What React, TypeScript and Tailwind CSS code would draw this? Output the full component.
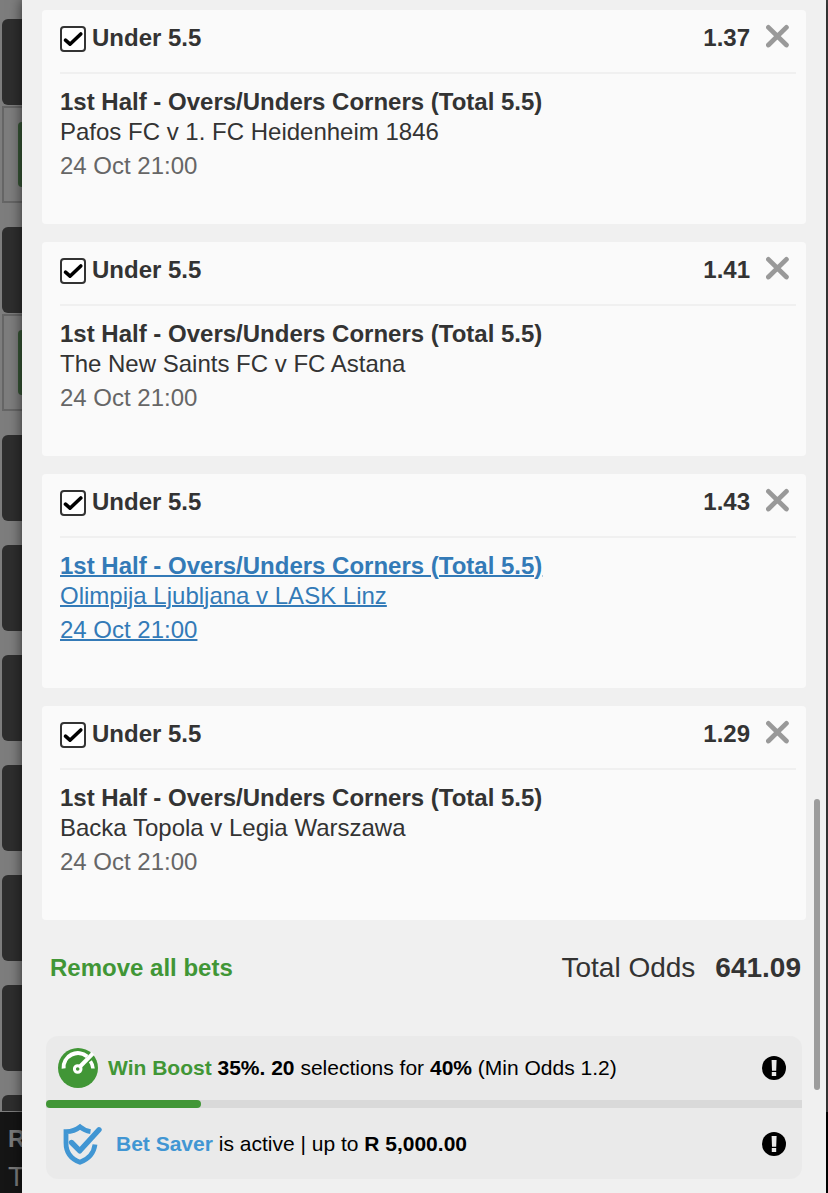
import { useState } from 'react'

type Bet = {
  id: number
  pick: string
  odds: string
  market: string
  fixture: string
  time: string
  highlighted?: boolean
}

const initialBets: Bet[] = [
  { id: 1, pick: 'Under 5.5', odds: '1.37', market: '1st Half - Overs/Unders Corners (Total 5.5)', fixture: 'Pafos FC v 1. FC Heidenheim 1846', time: '24 Oct 21:00' },
  { id: 2, pick: 'Under 5.5', odds: '1.41', market: '1st Half - Overs/Unders Corners (Total 5.5)', fixture: 'The New Saints FC v FC Astana', time: '24 Oct 21:00' },
  { id: 3, pick: 'Under 5.5', odds: '1.43', market: '1st Half - Overs/Unders Corners (Total 5.5)', fixture: 'Olimpija Ljubljana v LASK Linz', time: '24 Oct 21:00', highlighted: true },
  { id: 4, pick: 'Under 5.5', odds: '1.29', market: '1st Half - Overs/Unders Corners (Total 5.5)', fixture: 'Backa Topola v Legia Warszawa', time: '24 Oct 21:00' },
]

const boostProgress = 20.5

function GaugeIcon() {
  return (
    <svg viewBox="0 0 40 40" className="size-10 shrink-0" fill="none" aria-hidden="true">
      <circle cx="20" cy="20" r="20" fill="#419636" />
      <path d="M5.6 20.5A14.3 14.3 0 0 1 29.2 8.6" stroke="#fff" strokeWidth="4" />
      <path d="M32.4 13.2A14.3 14.3 0 0 1 35 20.5" stroke="#fff" strokeWidth="3.6" />
      <path d="M21.6 19L35 5.4" stroke="#fff" strokeWidth="4" />
      <circle cx="19.7" cy="21" r="3.3" stroke="#fff" strokeWidth="3" fill="#419636" />
    </svg>
  )
}

function ShieldIcon() {
  return (
    <svg viewBox="0 0 42 42" className="size-[42px] shrink-0" fill="none" stroke="#4196d3" aria-hidden="true">
      <path d="M28.5 8.6C24.5 8 21 6.4 18 3.8C14.2 7 9.5 8.5 4 8.6V20C4 29.5 9 36 18 39.2C27 36 31.8 30.5 33 21.5" strokeWidth="4.8" />
      <path d="M9.5 19.5L17.8 27.8L37 6.8" strokeWidth="5.4" strokeLinecap="round" strokeLinejoin="round" />
    </svg>
  )
}

function InfoButton({ label }: { label: string }) {
  return (
    <button type="button" aria-label={label} className="size-6 shrink-0 cursor-pointer">
      <svg viewBox="0 0 24 24" className="size-6">
        <circle cx="12" cy="12" r="12" fill="#000" />
        <path d="M9.6 4h5l-.4 10.8h-4.2zM9.8 16h4.4v4h-4.4z" fill="#eaeaea" />
      </svg>
    </button>
  )
}

function BetCard({ bet, onRemove }: { bet: Bet; onRemove: () => void }) {
  return (
    <article className="rounded bg-[#fafafa] pr-2.5 pl-[18px] pb-[43px]">
      <div className="flex items-center justify-between border-b-2 border-[#f0f0f0] pb-1.5">
        <label className="flex h-14 cursor-pointer items-center gap-1.5 font-bold">
          <span className="grid size-[26px] pt-px">
            <input
              type="checkbox"
              defaultChecked
              className="peer col-start-1 row-start-1 size-[26px] appearance-none rounded border-2 border-[#333] bg-white"
            />
            <svg
              viewBox="0 0 26 26"
              className="pointer-events-none invisible col-start-1 row-start-1 size-[26px] peer-checked:visible"
              fill="none"
              aria-hidden="true"
            >
              <path d="M5.5 14.2L10 18.2L20.8 8" stroke="#000" strokeWidth="3.6" strokeLinecap="round" strokeLinejoin="round" />
            </svg>
          </span>
          {bet.pick}
        </label>
        <div className="flex items-center gap-4 pr-1.5">
          <span className="font-bold">{bet.odds}</span>
          <button type="button" aria-label="Remove bet" onClick={onRemove} className="cursor-pointer pb-1">
            <svg viewBox="0 0 24 24" className="size-6" fill="none">
              <path d="M2.4 3.4L20.4 21M20.4 3.4L2.4 21" stroke="#999" strokeWidth="4.8" strokeLinecap="round" />
            </svg>
          </button>
        </div>
      </div>
      <a
        href="#event"
        className={bet.highlighted ? 'block pt-[13px] text-[#337ab7] underline decoration-2' : 'block pt-[13px]'}
      >
        <p className="font-bold">{bet.market}</p>
        <p>{bet.fixture}</p>
        <p className={bet.highlighted ? 'pt-1' : 'pt-1 text-[#666]'}>{bet.time}</p>
      </a>
    </article>
  )
}

// Slice of the dimmed page that stays visible beside the open betslip
function DimmedPage() {
  return (
    <div className="flex w-[22px] shrink-0 flex-col overflow-hidden bg-[#7d7d7d]">
      <div className="flex flex-1 flex-col gap-6 pt-[19px] pl-0.5">
        {[0, 1].map((i) => (
          <div key={i} className="flex flex-col gap-px">
            <div className="h-[86px] rounded-l-md bg-[#2e2e2e]" />
            <div className="flex h-[97px] justify-end border-2 border-r-0 border-[#656565] py-3.5">
              <div className="w-1 rounded-l bg-[#365434]" />
            </div>
          </div>
        ))}
        {[0, 1, 2, 3, 4, 5].map((i) => (
          <div key={i} className="h-[86px] rounded-l-md bg-[#2e2e2e]" />
        ))}
        <div className="h-4 rounded-tl-md bg-[#2e2e2e]" />
      </div>
      <div className="h-[81px] bg-[#151515] pt-3 pl-2 text-[#7a7a7a]">
        <p className="font-bold">R</p>
        <p className="pt-2 text-[28px]">T</p>
      </div>
    </div>
  )
}

export default function App() {
  const [bets, setBets] = useState(initialBets)

  return (
    <div className="flex min-h-screen font-['Liberation_Sans',Arial,sans-serif] text-2xl leading-[30px] text-[#333]">
      <DimmedPage />

      <main className="relative min-w-0 flex-1 bg-[#f0f0f0] px-5 pt-2.5 pb-3.5 shadow-[0_0_12px_rgba(0,0,0,0.6)]">
        <section className="flex flex-col gap-[18px]">
          {bets.map((bet) => (
            <BetCard
              key={bet.id}
              bet={bet}
              onRemove={() => setBets(bets.filter((b) => b.id !== bet.id))}
            />
          ))}
        </section>

        <div className="flex items-center justify-between pt-[33px] pr-[5px] pl-2">
          <button type="button" onClick={() => setBets([])} className="cursor-pointer font-bold text-[#419636]">
            Remove all bets
          </button>
          <p className="flex gap-5 text-[28px]">
            <span>Total Odds</span>
            <strong>641.09</strong>
          </p>
        </div>

        <section className="mx-1 mt-[53px] overflow-hidden rounded-xl bg-[#eaeaea] text-[21px] text-black">
          <div className="flex h-16 items-center gap-2.5 pr-4 pl-3">
            <GaugeIcon />
            <p className="flex-1">
              <strong className="text-[#419636]">Win Boost</strong> <strong>35%. 20</strong> selections for{' '}
              <strong>40%</strong> (Min Odds 1.2)
            </p>
            <InfoButton label="Win Boost info" />
          </div>
          <div className="h-2 bg-[#d9d9d9]">
            <div className="h-2 rounded-full bg-[#419636]" style={{ width: `${boostProgress}%` }} />
          </div>
          <div className="flex h-[71px] items-center gap-3 pr-4 pl-4">
            <ShieldIcon />
            <p className="flex-1">
              <strong className="text-[#4196d3]">Bet Saver</strong> is active | up to <strong>R 5,000.00</strong>
            </p>
            <InfoButton label="Bet Saver info" />
          </div>
        </section>

        <div className="absolute top-[799px] right-1.5 h-[291px] w-1.5 rounded-full bg-[#9c9c9c]" />
      </main>

      <div className="flex w-0.5 shrink-0 flex-col bg-[#444]">
        <div className="mt-auto h-[81px] bg-black" />
      </div>
    </div>
  )
}
